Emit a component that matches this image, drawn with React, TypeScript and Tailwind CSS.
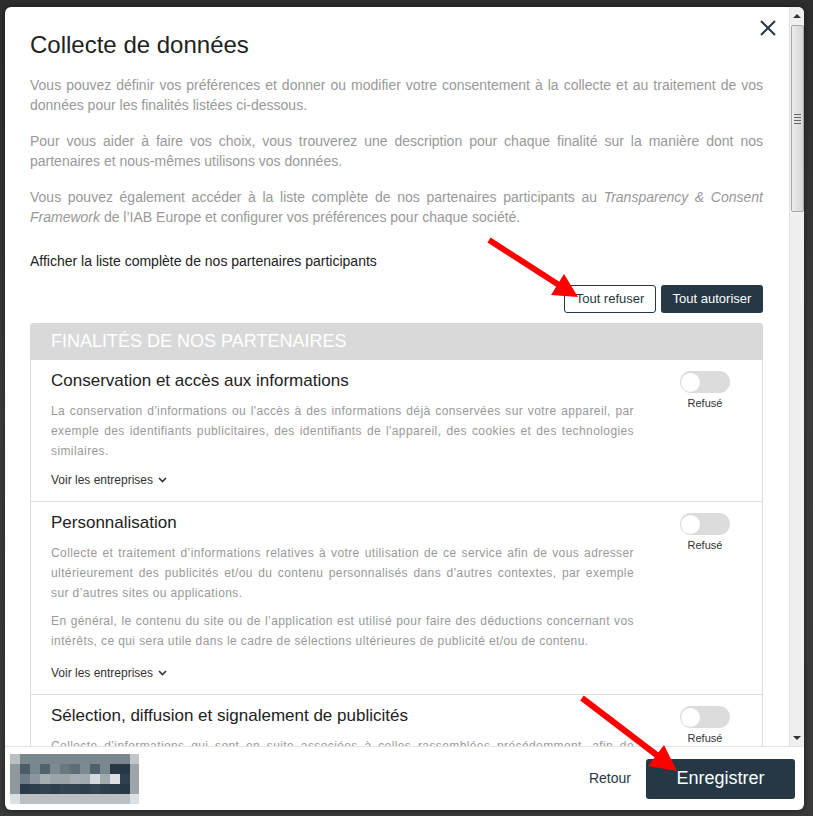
import React from 'react';

const font = "font-['Liberation_Sans',Arial,sans-serif]";

const purposes = [
  {
    title: 'Conservation et accès aux informations',
    paras: [
      "La conservation d'informations ou l'accès à des informations déjà conservées sur votre appareil, par exemple des identifiants publicitaires, des identifiants de l'appareil, des cookies et des technologies similaires.",
    ],
  },
  {
    title: 'Personnalisation',
    paras: [
      'Collecte et traitement d’informations relatives à votre utilisation de ce service afin de vous adresser ultérieurement des publicités et/ou du contenu personnalisés dans d’autres contextes, par exemple sur d’autres sites ou applications.',
      'En général, le contenu du site ou de l’application est utilisé pour faire des déductions concernant vos intérêts, ce qui sera utile dans le cadre de sélections ultérieures de publicité et/ou de contenu.',
    ],
  },
  {
    title: 'Sélection, diffusion et signalement de publicités',
    paras: [
      'Collecte d’informations qui sont en suite associées à celles rassemblées précédemment, afin de sélectionner et diffuser des publicités à votre égard, puis évaluer leur diffusion ainsi que leur efficacité.',
    ],
  },
];

// logo floué (mosaïque)
const mosaic = [
  ['bg-[#b9bfc3]', 'bg-[#7b878e]', 'bg-[#7b878e]', 'bg-[#7b878e]', 'bg-[#7b878e]', 'bg-[#7b878e]', 'bg-[#7b878e]', 'bg-[#7b878e]', 'bg-[#7b878e]', 'bg-[#7b878e]', 'bg-[#7b878e]', 'bg-[#7b878e]', 'bg-[#c3c7ca]'],
  ['bg-[#8e989d]', 'bg-[#4b5b67]', 'bg-[#7b878e]', 'bg-[#52626d]', 'bg-[#7e8a91]', 'bg-[#6a7880]', 'bg-[#5e6d77]', 'bg-[#7e8a91]', 'bg-[#4f5f6b]', 'bg-[#7b878e]', 'bg-[#263846]', 'bg-[#263846]', 'bg-[#9ea6ab]'],
  ['bg-[#8e989d]', 'bg-[#6e7c85]', 'bg-[#8b969c]', 'bg-[#a5aeb3]', 'bg-[#9ba4a9]', 'bg-[#9ba4a9]', 'bg-[#a7afb4]', 'bg-[#a1aaaf]', 'bg-[#d5d9db]', 'bg-[#a1aaaf]', 'bg-[#dee1e3]', 'bg-[#2f404d]', 'bg-[#9ea6ab]'],
  ['bg-[#8e989d]', 'bg-[#2b3c49]', 'bg-[#2e3f4c]', 'bg-[#33434f]', 'bg-[#2e3f4c]', 'bg-[#33434f]', 'bg-[#33434f]', 'bg-[#2e3f4c]', 'bg-[#33434f]', 'bg-[#2e3f4c]', 'bg-[#2b3c49]', 'bg-[#263846]', 'bg-[#9ea6ab]'],
  ['bg-[#dde0e2]', 'bg-[#b9bfc3]', 'bg-[#b9bfc3]', 'bg-[#b9bfc3]', 'bg-[#b9bfc3]', 'bg-[#b9bfc3]', 'bg-[#b9bfc3]', 'bg-[#b9bfc3]', 'bg-[#b9bfc3]', 'bg-[#b9bfc3]', 'bg-[#b9bfc3]', 'bg-[#b9bfc3]', 'bg-[#dde0e2]'],
];

function Toggle() {
  return (
    <div className="flex flex-col items-center">
      <div className="w-[50px] h-[22px] rounded-full bg-[#dcdcdc] flex items-center pl-[1px]">
        <div className="w-[19px] h-[19px] rounded-full bg-white" />
      </div>
      <span className="mt-[4px] text-[11px] leading-[13px] text-[#333]">Refusé</span>
    </div>
  );
}

function Purpose({ title, paras, last }: { title: string; paras: string[]; last?: boolean }) {
  return (
    <div className={`flex px-[20px] pt-[10px] pb-[12px] border-l border-r border-[#dddddd] ${last ? '' : 'border-b'}`}>
      <div className="w-[583px]">
        <h3 className="text-[17px] leading-[22px] text-[#222]">{title}</h3>
        <div className={`mt-[9px] flex flex-col gap-[8px] ${paras.length > 1 ? 'pb-[3px]' : ''}`}>
          {paras.map((p, i) => (
            <p key={i} className="text-[12px] leading-[20px] tracking-[0.4px] text-[#999] text-justify">
              {p}
            </p>
          ))}
        </div>
        <button className="mt-[10px] flex items-center gap-[5px] text-[12px] leading-[18px] text-[#333]">
          Voir les entreprises
          <svg width="9" height="6" viewBox="0 0 9 6" fill="none">
            <path d="M1 1l3.5 3.5L8 1" stroke="#333" strokeWidth="1.6" />
          </svg>
        </button>
      </div>
      <div className="ml-auto mr-[12px] pt-[1px]">
        <Toggle />
      </div>
    </div>
  );
}

function Scrollbar() {
  return (
    <div className="w-[15px] shrink-0 bg-[#f0f0f0] border-l border-[#e2e2e2] flex flex-col items-center">
      <div className="h-[18px] flex items-center justify-center">
        <div className="w-0 h-0 border-l-[4px] border-r-[4px] border-b-[4px] border-l-transparent border-r-transparent border-b-[#333]" />
      </div>
      <div className="w-[13px] h-[187px] rounded-[2px] border border-[#a9a9a9] bg-gradient-to-r from-[#ececec] to-[#d6d6d6] flex flex-col items-center justify-center gap-[2px]">
        <div className="w-[7px] h-px bg-[#666]" />
        <div className="w-[7px] h-px bg-[#666]" />
        <div className="w-[7px] h-px bg-[#666]" />
        <div className="w-[7px] h-px bg-[#666]" />
      </div>
      <div className="flex-1" />
      <div className="h-[16px] flex items-center justify-center">
        <div className="w-0 h-0 border-l-[4px] border-r-[4px] border-t-[4px] border-l-transparent border-r-transparent border-t-[#333]" />
      </div>
    </div>
  );
}

export default function App() {
  return (
    <div className={`relative w-[813px] h-[816px] overflow-hidden bg-gradient-to-b from-[#2e2e2e] via-[#3d3d3d] to-[#3a3a3a] pt-[7px] pl-[5px] ${font}`}>
      <div className="w-[799px] h-[803px] bg-white rounded-[6px] overflow-hidden flex flex-col shadow-[0_0_6px_rgba(0,0,0,0.5)]">
        <div className="h-[740px] flex border-b border-[#e3e3e3]">
          <div className="relative flex-1 overflow-hidden pl-[25px] pr-[26px] pt-[24px]">
            <button className="absolute top-[13px] right-[13px]">
              <svg width="16" height="16" viewBox="0 0 16 16">
                <path d="M1 1l14 14M15 1L1 15" stroke="#263846" strokeWidth="2" />
              </svg>
            </button>

            <h2 className="text-[24px] leading-[28px] text-[#222]">Collecte de données</h2>

            <div className="mt-[16px] flex flex-col gap-[16px] text-[14px] leading-[20px] text-[#999] text-justify">
              <p>
                Vous pouvez définir vos préférences et donner ou modifier votre consentement à la collecte et au traitement de vos
                données pour les finalités listées ci-dessous.
              </p>
              <p>
                Pour vous aider à faire vos choix, vous trouverez une description pour chaque finalité sur la manière dont nos
                partenaires et nous-mêmes utilisons vos données.
              </p>
              <p>
                Vous pouvez également accéder à la liste complète de nos partenaires participants au{' '}
                <i>Transparency &amp; Consent Framework</i> de l’IAB Europe et configurer vos préférences pour chaque société.
              </p>
            </div>

            <p className="mt-[24px] text-[14px] leading-[20px] text-[#222]">
              Afficher la liste complète de nos partenaires participants
            </p>

            <div className="mt-[14px] flex justify-end gap-[5px]">
              <button className="h-[28px] w-[92px] rounded-[3px] border border-[#263846] bg-white text-[13px] text-[#263846]">
                Tout refuser
              </button>
              <button className="h-[28px] w-[102px] rounded-[3px] bg-[#263846] text-[13px] text-white">
                Tout autoriser
              </button>
            </div>

            <div className="mt-[10px]">
              <div className="h-[37px] rounded-t-[3px] bg-[#d9d9d9] flex items-center pl-[21px] text-[18px] text-white uppercase">
                Finalités de nos partenaires
              </div>
              {purposes.map((p, i) => (
                <Purpose key={i} title={p.title} paras={p.paras} last={i === purposes.length - 1} />
              ))}
            </div>
          </div>
          <Scrollbar />
        </div>

        <div className="flex-1 flex items-center pl-[5px] pr-[9px]">
          <div className="flex flex-col">
            {mosaic.map((row, r) => (
              <div key={r} className="flex">
                {row.map((c, k) => (
                  <div key={k} className={`h-[10px] ${k === 12 ? 'w-[9px]' : 'w-[10px]'} ${c}`} />
                ))}
              </div>
            ))}
          </div>
          <div className="ml-auto flex items-center gap-[15px]">
            <button className="text-[14px] text-[#263846]">Retour</button>
            <button className="h-[40px] w-[149px] rounded-[3px] bg-[#263846] text-[18px] text-white">Enregistrer</button>
          </div>
        </div>
      </div>

      {/* flèches d'annotation */}
      <svg className="absolute inset-0 pointer-events-none" width="813" height="816" viewBox="0 0 813 816">
        <line x1="489" y1="240" x2="559" y2="285" stroke="#ff0000" strokeWidth="6" />
        <polygon points="578,297 564,274 551,295" fill="#ff0000" />
        <line x1="582" y1="698" x2="658" y2="756" stroke="#ff0000" strokeWidth="6" />
        <polygon points="677,771 664,745 648,766" fill="#ff0000" />
      </svg>
    </div>
  );
}
